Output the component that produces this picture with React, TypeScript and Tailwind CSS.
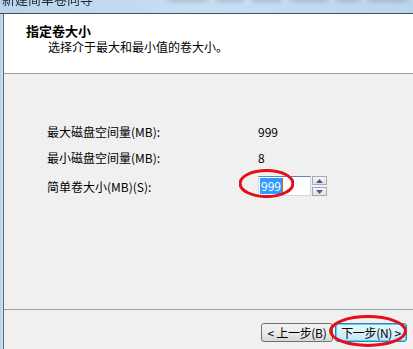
import React from 'react';

const font = { fontFamily: '"Noto Sans CJK SC", "Noto Sans", sans-serif' };

function Ellipse({ className }: { className: string }) {
  return (
    <svg className={`pointer-events-none absolute ${className}`} viewBox="0 0 100 40" preserveAspectRatio="none">
      <ellipse cx="50" cy="20" rx="48" ry="18" fill="none" stroke="#e3101c" strokeWidth="3" vectorEffect="non-scaling-stroke" />
    </svg>
  );
}

function Spinner() {
  return (
    <div className="flex flex-col gap-[2px] ml-[1px]">
      <div className="w-[15px] h-[9px] border border-[#a9a9a9] bg-gradient-to-b from-[#f6f6f6] to-[#e2e2e2] flex items-center justify-center">
        <svg width="7" height="4" viewBox="0 0 7 4"><path d="M3.5 0 L7 4 L0 4 Z" fill="#3d5e9a" /></svg>
      </div>
      <div className="w-[15px] h-[9px] border border-[#a9a9a9] bg-gradient-to-b from-[#f6f6f6] to-[#e2e2e2] flex items-center justify-center">
        <svg width="7" height="4" viewBox="0 0 7 4"><path d="M0 0 L7 0 L3.5 4 Z" fill="#3d5e9a" /></svg>
      </div>
    </div>
  );
}

export default function App() {
  return (
    <div className="relative w-[413px] h-[349px] overflow-hidden flex flex-col text-[12px] text-black bg-[#f0f0f0]" style={font}>
      {/* title bar (glass) */}
      <div className="h-[14px] border-b border-[#3e4e5e] bg-gradient-to-r from-[#bcd3ea] via-[#c9def3] to-[#bcd5ee] overflow-hidden flex items-start">
        <span className="ml-[2px] -mt-[7px] leading-[12px] text-[13px] text-[#1b2533] blur-[0.4px] whitespace-nowrap">新建简单卷向导</span>
        <div className="flex gap-[8px] ml-[75px] -mt-[3px] blur-[2px] opacity-25">
          <div className="w-[40px] h-[5px] bg-[#4a5d74]" />
          <div className="w-[28px] h-[5px] bg-[#4a5d74]" />
          <div className="w-[30px] h-[5px] bg-[#4a5d74]" />
          <div className="w-[38px] h-[5px] bg-[#4a5d74]" />
          <div className="w-[24px] h-[5px] bg-[#4a5d74]" />
          <div className="w-[40px] h-[5px] bg-[#4a5d74]" />
        </div>
      </div>

      <div className="flex flex-1">
        {/* left frame */}
        <div className="w-[4px] bg-gradient-to-r from-[#b5cde6] to-[#d3e3f3] border-r border-[#56687a]" />

        <div className="flex-1 flex flex-col">
          {/* header */}
          <div className="h-[60px] bg-white border-b border-[#a0a0a0] pl-[22px] pt-[9px]">
            <div className="font-bold leading-[16px] text-[13px]">指定卷大小</div>
            <div className="pl-[22px] leading-[15px]">选择介于最大和最小值的卷大小。</div>
          </div>

          {/* body */}
          <div className="h-[235px] pl-[43px] pt-[50px] grid grid-cols-[211px_1fr] auto-rows-min gap-y-[10px] leading-[16px]">
            <div>最大磁盘空间量(MB):</div>
            <div>999</div>
            <div>最小磁盘空间量(MB):</div>
            <div>8</div>
            <div className="self-center mt-[1px]">简单卷大小(MB)(S):</div>
            <div className="flex items-center">
              <div className="w-[53px] h-[20px] bg-white border border-[#c5daed] border-t-[#5b8ac0] flex items-center pl-[1px]">
                <span className="bg-[#3399ff] text-white leading-[16px] px-[1px]">999</span>
                <span className="w-[1px] h-[16px] bg-[#cc6a1a]" />
              </div>
              <Spinner />
            </div>
          </div>

          {/* footer */}
          <div className="flex-1 border-t border-[#a0a0a0] flex justify-end items-start gap-[2px] pr-[6px] pt-[13px]">
            <button className="w-[72px] h-[19px] rounded-[3px] border border-[#707070] bg-gradient-to-b from-[#f3f3f3] via-[#ebebeb] to-[#d7d7d7] leading-[17px] text-[12px] tracking-[-0.3px]">
              &lt; 上一步(B)
            </button>
            <button className="w-[72px] h-[19px] rounded-[3px] border border-[#3c7fb1] bg-gradient-to-b from-[#eaf6fd] via-[#d9f0fc] to-[#bee6fd] leading-[17px] text-[12px] tracking-[-0.3px] shadow-[inset_0_0_0_1px_#48d4fb]">
              下一步(N) &gt;
            </button>
          </div>
        </div>
      </div>

      <Ellipse className="left-[239px] top-[169px] w-[55px] h-[29px]" />
      <Ellipse className="left-[329px] top-[315px] w-[78px] h-[32px]" />
    </div>
  );
}
